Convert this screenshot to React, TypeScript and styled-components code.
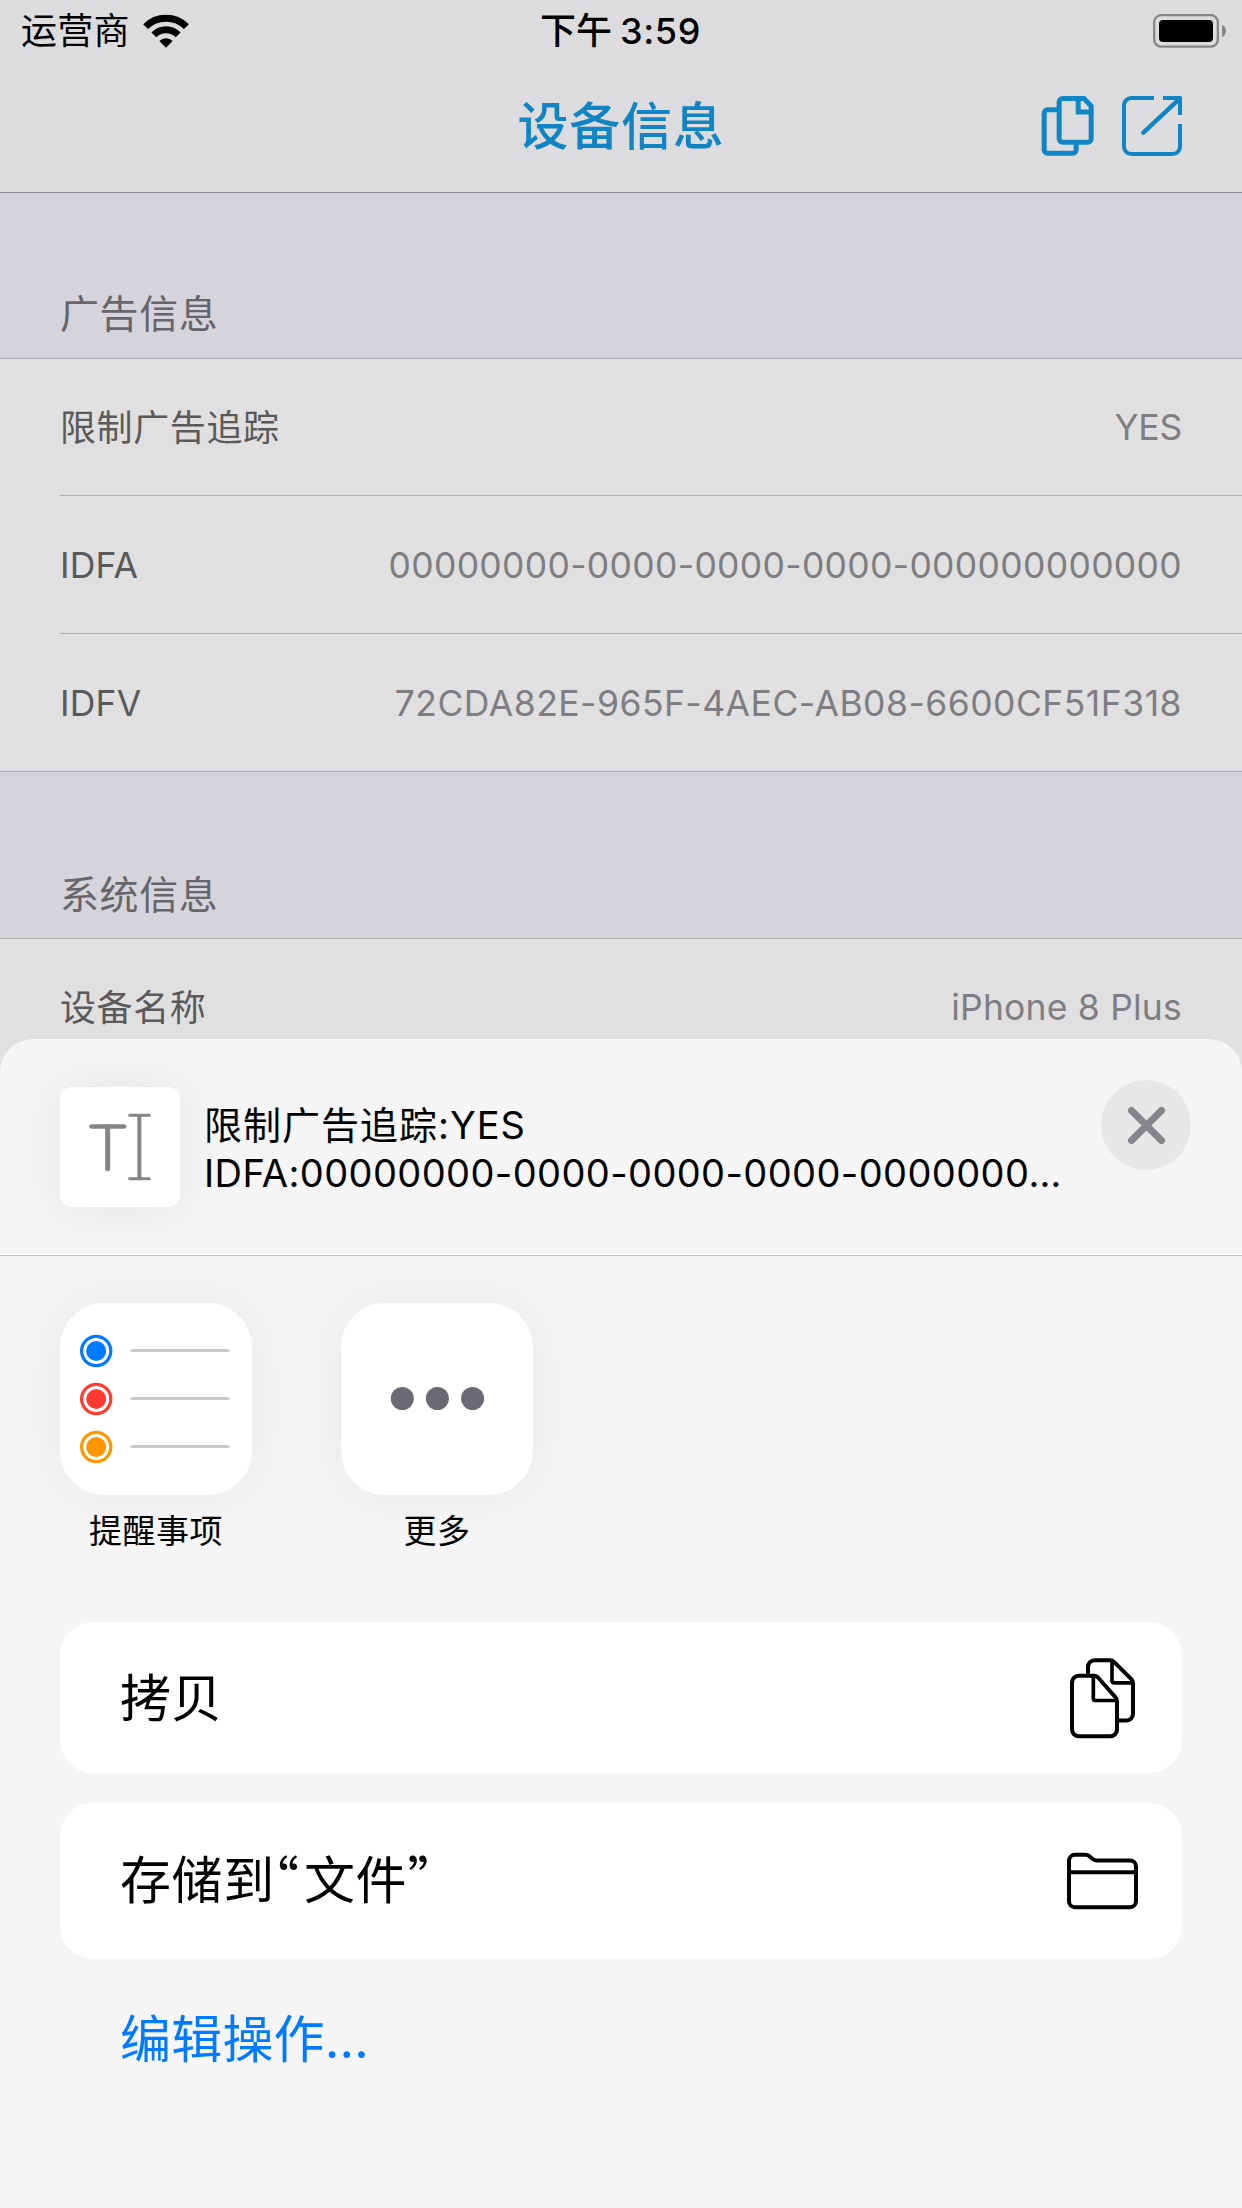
import React from "react";
import styled, { createGlobalStyle } from "styled-components";

const GlobalStyle = createGlobalStyle`
  * { box-sizing: border-box; }
  body {
    margin: 0;
    font-family: Inter, "Noto Sans CJK SC", sans-serif;
    color: #000;
  }
`;

const Screen = styled.div`
  position: relative;
  width: 1242px;
  height: 2208px;
  overflow: hidden;
  background: #d5d4da;
`;

const TopBar = styled.header`
  height: 193px;
  background: #dcdcde;
  border-bottom: 1px solid #909094;
`;

const StatusBar = styled.div`
  display: grid;
  grid-template-columns: 1fr auto 1fr;
  align-items: center;
  height: 62px;
  padding: 0 16px 0 21px;
  font-size: 36px;
  line-height: 62px;
`;

const Carrier = styled.div`
  display: flex;
  align-items: center;
  gap: 13px;
  letter-spacing: 0.3px;
`;

const Clock = styled.div`
  display: flex;
  gap: 8px;
  padding: 0 6px 0 0;
  font-weight: 500;
`;

const ClockDigits = styled.span`
  font-weight: 550;
  letter-spacing: 0.6px;
`;

const BatterySlot = styled.div`
  display: flex;
  justify-content: flex-end;
`;

const NavBar = styled.div`
  display: grid;
  grid-template-columns: 1fr auto 1fr;
  align-items: center;
  height: 130px;
  padding: 0 60px 2px;
`;

const NavTitle = styled.h1`
  grid-column: 2;
  margin: 0;
  padding-top: 1px;
  font-size: 51px;
  font-weight: 500;
  line-height: 60px;
  letter-spacing: 0.7px;
  color: #1185c3;
`;

const NavActions = styled.div`
  display: flex;
  justify-content: flex-end;
  gap: 27px;
`;

const SectionHeader = styled.h2<{ $top: number; $height: number }>`
  margin: 0;
  height: ${(p) => p.$height}px;
  padding: ${(p) => p.$top}px 60px 0;
  font-size: 39px;
  font-weight: 400;
  line-height: 50px;
  letter-spacing: 0.6px;
  color: #65656a;
  border-bottom: 1px solid #acacaf;
`;

const List = styled.div`
  background: #e0e0e0;
  border-bottom: 1px solid #acacaf;
`;

const Row = styled.div<{ $height: number }>`
  display: flex;
  align-items: center;
  justify-content: space-between;
  height: ${(p) => p.$height}px;
  margin-left: 60px;
  padding: 2px 60px 0 0;
  font-size: 35.5px;
  line-height: 50px;
  & + & { border-top: 1px solid #acacaf; }
`;

const Label = styled.span<{ $cjk?: boolean }>`
  font-size: ${(p) => (p.$cjk ? 36 : 35.5)}px;
  letter-spacing: ${(p) => (p.$cjk ? 0.6 : 0.2)}px;
  color: #5a5a5a;
`;

const Value = styled.span<{ $spacing: number }>`
  letter-spacing: ${(p) => p.$spacing}px;
  color: #7e7e82;
`;

const Sheet = styled.section`
  position: absolute;
  left: 0;
  right: 0;
  top: 1039px;
  bottom: 0;
  border-radius: 33px 33px 0 0;
  background: #f5f5f5;
`;

const SheetHeader = styled.div`
  display: flex;
  align-items: flex-start;
  height: 217px;
  padding: 0 51px 0 60px;
  border-bottom: 1px solid #bfbfc0;
`;

const Thumb = styled.div`
  width: 120px;
  height: 120px;
  margin-top: 48px;
  border-radius: 12px;
  background: #fff;
  box-shadow: 0 0 50px rgba(0, 0, 0, 0.07);
  svg { display: block; }
`;

const Summary = styled.div`
  flex: 1;
  margin: 62px 0 0 24px;
  font-size: 38px;
  line-height: 48px;
  white-space: nowrap;
`;

const SummaryLine = styled.div<{ $spacing: number }>`
  letter-spacing: ${(p) => p.$spacing}px;
`;

const CloseButton = styled.button`
  display: flex;
  width: 90px;
  height: 90px;
  margin-top: 41px;
  padding: 0;
  border: 0;
  border-radius: 50%;
  background: #e7e7e7;
`;

const ShareRow = styled.div`
  display: flex;
  gap: 89px;
  height: 366px;
  padding: 47px 60px 0;
`;

const ShareItem = styled.div`
  display: flex;
  flex-direction: column;
  align-items: center;
  width: 192px;
`;

const ShareTile = styled.div`
  width: 192px;
  height: 192px;
  border-radius: 44px;
  background: #fff;
  box-shadow: 0 0 54px rgba(0, 0, 0, 0.055);
  svg { display: block; }
`;

const ShareLabel = styled.span`
  margin-top: 15px;
  font-size: 33px;
  line-height: 42px;
  letter-spacing: 0.5px;
`;

const Actions = styled.div`
  display: flex;
  flex-direction: column;
  padding: 0 60px;
`;

const ActionCard = styled.div<{ $height: number }>`
  display: flex;
  align-items: center;
  justify-content: space-between;
  height: ${(p) => p.$height}px;
  padding: 0 42px 0 60px;
  border-radius: 33px;
  background: #fff;
  & + & { margin-top: 30px; }
`;

const ActionLabel = styled.span<{ $shift: number; $spacing: number }>`
  margin-top: ${(p) => p.$shift}px;
  font-size: 51px;
  line-height: 60px;
  letter-spacing: ${(p) => p.$spacing}px;
`;

const Quote = styled.span<{ $before: number; $after: number }>`
  margin: 0 ${(p) => p.$after}px 0 ${(p) => p.$before}px;
  font-family: "Noto Sans CJK SC", sans-serif;
  font-feature-settings: "palt";
`;

const EditActions = styled.div`
  padding: 51px 60px 0;
  font-size: 51px;
  line-height: 60px;
  letter-spacing: 0.2px;
  color: #007aff;
`;

const WifiIcon = () => (
  <svg width="46" height="34" viewBox="429 37 138 102" fill="none" stroke="#000" strokeWidth="21">
    <path d="M436.8 74.8a86.5 86.5 0 0 1 122.4 0" />
    <path d="M461.6 99.6a51.5 51.5 0 0 1 72.8 0" />
    <path d="M498 138l-20-20a28.3 28.3 0 0 1 40 0z" fill="#000" stroke="none" />
  </svg>
);

const BatteryIcon = () => (
  <svg width="73" height="34" viewBox="459 39 219 102">
    <rect x="462.5" y="42.5" width="191" height="94.5" rx="21" fill="none" stroke="#868688" strokeWidth="7" />
    <rect x="477" y="57" width="162" height="66" rx="12" fill="#000" />
    <path d="M666 72c7 2 12 9 12 18s-5 16-12 18z" fill="#868688" />
  </svg>
);

const CopyNavIcon = () => (
  <svg width="54" height="60" viewBox="124 288 162 180" fill="none" stroke="#1185c3" strokeWidth="15">
    <path d="M178 329.5H144a10.5 10.5 0 0 0-10.5 10.5V449.5a10.5 10.5 0 0 0 10.5 10.5H219a10.5 10.5 0 0 0 10.5-10.5V428" />
    <path d="M189 295.5H253L274.5 318V416a10.5 10.5 0 0 1-10.5 10.5H189a10.5 10.5 0 0 1-10.5-10.5V306a10.5 10.5 0 0 1 10.5-10.5z" />
    <path d="M235.5 296V336H274" />
  </svg>
);

const ExportIcon = () => (
  <svg width="60" height="60" viewBox="366 288 180 180" fill="none" stroke="#1185c3" strokeWidth="12">
    <path d="M462 294H394a22 22 0 0 0-22 22V440a22 22 0 0 0 22 22H518a22 22 0 0 0 22-22V372" />
    <path d="M489 294H540V345" strokeLinejoin="round" />
    <path d="M430 398L539 296" strokeLinecap="round" strokeWidth="13" />
  </svg>
);

const TextCursorIcon = () => (
  <svg width="120" height="120" viewBox="180 741 360 360" fill="none" stroke="#858585" strokeLinecap="round">
    <path d="M274 859.5H373" strokeWidth="13" />
    <path d="M323 860V986" strokeWidth="15" />
    <path d="M389 826H448M389 1016H448" strokeWidth="9" />
    <path d="M418 826V1016" strokeWidth="12" strokeLinecap="butt" />
  </svg>
);

const CloseIcon = () => (
  <svg width="90" height="90" viewBox="843 360 270 270" stroke="#85858a" strokeWidth="21" strokeLinecap="round">
    <path d="M934.5 451.5L1024.5 541.5M1024.5 451.5L934.5 541.5" />
  </svg>
);

const reminderColors = ["#007aff", "#ff3b30", "#ff9500"];

const RemindersIcon = () => (
  <svg width="192" height="192" viewBox="0 0 192 192">
    {reminderColors.map((color, i) => (
      <g key={color} transform={`translate(0 ${i * 48})`}>
        <circle cx="36.2" cy="48" r="14.6" fill="none" stroke={color} strokeWidth="3.2" />
        <circle cx="36.2" cy="48" r="10" fill={color} />
        <path d="M72 47.5H168" stroke="#c7c7cc" strokeWidth="3" strokeLinecap="round" />
      </g>
    ))}
  </svg>
);

const MoreIcon = () => (
  <svg width="192" height="192" viewBox="0 0 192 192" fill="#6a6a72">
    <circle cx="61.3" cy="95.5" r="11.5" />
    <circle cx="96.4" cy="95.5" r="11.5" />
    <circle cx="131.6" cy="95.5" r="11.5" />
  </svg>
);

const CopyIcon = () => (
  <svg width="75" height="90" viewBox="195 157.5 225 270" fill="none" stroke="#000" strokeWidth="12">
    <path d="M264 222V199a20 20 0 0 1 20-20H330q7 0 12 5L394 236q5 5 5 12V340a20 20 0 0 1-20 20H357" />
    <path d="M336 182V240q0 7 7 7H398" strokeWidth="11" />
    <path d="M282 226H236a20 20 0 0 0-20 20V387a20 20 0 0 0 20 20H331a20 20 0 0 0 20-20V302q0-7-5-12L294 231q-5-5-12-5z" />
    <path d="M280 228V293q0 7 7 7H350" strokeWidth="11" />
  </svg>
);

const FolderIcon = () => (
  <svg width="75" height="90" viewBox="195 707.5 225 270" fill="none" stroke="#000" strokeWidth="12">
    <path d="M207 782a18 18 0 0 1 18-18H256q7 0 12 4l9 8q6 5 13 5H390a18 18 0 0 1 18 18V903a18 18 0 0 1-18 18H225a18 18 0 0 1-18-18z" />
    <path d="M207 816H408" />
  </svg>
);

const adRows = [
  { label: "限制广告追踪", value: "YES", cjk: true, height: 136, spacing: -0.2 },
  { label: "IDFA", value: "00000000-0000-0000-0000-000000000000", cjk: false, height: 138, spacing: 0.32 },
  { label: "IDFV", value: "72CDA82E-965F-4AEC-AB08-6600CF51F318", cjk: false, height: 138, spacing: 0.48 },
];

export default function App() {
  return (
    <Screen>
      <GlobalStyle />
      <TopBar>
        <StatusBar>
          <Carrier>
            运营商
            <WifiIcon />
          </Carrier>
          <Clock>
            下午
            <ClockDigits>3:59</ClockDigits>
          </Clock>
          <BatterySlot>
            <BatteryIcon />
          </BatterySlot>
        </StatusBar>
        <NavBar>
          <NavTitle>设备信息</NavTitle>
          <NavActions>
            <CopyNavIcon />
            <ExportIcon />
          </NavActions>
        </NavBar>
      </TopBar>

      <SectionHeader $top={96} $height={166}>广告信息</SectionHeader>
      <List>
        {adRows.map((row) => (
          <Row key={row.label} $height={row.height}>
            <Label $cjk={row.cjk}>{row.label}</Label>
            <Value $spacing={row.spacing}>{row.value}</Value>
          </Row>
        ))}
      </List>
      <SectionHeader $top={98} $height={167}>系统信息</SectionHeader>
      <List>
        <Row $height={135}>
          <Label $cjk>设备名称</Label>
          <Value $spacing={0.2}>iPhone 8 Plus</Value>
        </Row>
      </List>

      <Sheet>
        <SheetHeader>
          <Thumb>
            <TextCursorIcon />
          </Thumb>
          <Summary>
            <SummaryLine $spacing={1}>限制广告追踪:YES</SummaryLine>
            <SummaryLine $spacing={0.4}>IDFA:00000000-0000-0000-0000-0000000…</SummaryLine>
          </Summary>
          <CloseButton>
            <CloseIcon />
          </CloseButton>
        </SheetHeader>
        <ShareRow>
          <ShareItem>
            <ShareTile>
              <RemindersIcon />
            </ShareTile>
            <ShareLabel>提醒事项</ShareLabel>
          </ShareItem>
          <ShareItem>
            <ShareTile>
              <MoreIcon />
            </ShareTile>
            <ShareLabel>更多</ShareLabel>
          </ShareItem>
        </ShareRow>
        <Actions>
          <ActionCard $height={151}>
            <ActionLabel $shift={2} $spacing={0}>拷贝</ActionLabel>
            <CopyIcon />
          </ActionCard>
          <ActionCard $height={156}>
            <ActionLabel $shift={-4} $spacing={0.6}>
              存储到<Quote $before={-2} $after={5}>“</Quote>文件<Quote $before={1} $after={0}>”</Quote>
            </ActionLabel>
            <FolderIcon />
          </ActionCard>
          <EditActions>编辑操作…</EditActions>
        </Actions>
      </Sheet>
    </Screen>
  );
}
